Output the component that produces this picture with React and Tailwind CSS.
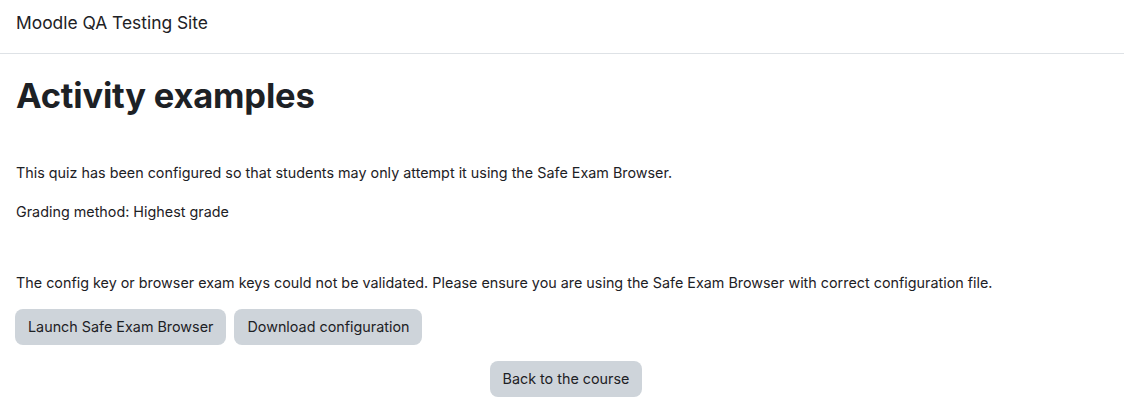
import React from "react";

const btn =
  "bg-[#ced4da] text-[#1d2125] rounded-lg px-[13px] h-9 text-[14.35px] leading-none";

export default function App() {
  return (
    <div className="min-h-screen bg-white text-[#1d2125] font-['Inter',sans-serif]">
      {/* NAVBAR */}
      <header className="h-[54px] border-b border-[#dee2e6] flex items-start pt-[11px] px-4">
        <span className="text-[17.4px] leading-6">Moodle QA Testing Site</span>
      </header>

      <main className="px-4">
        <h1 className="text-[34.5px] font-bold leading-none mt-[25px] tracking-[-0.2px]">
          Activity examples
        </h1>

        <p className="text-[14.35px] mt-[48px]">
          This quiz has been configured so that students may only attempt it using
          the Safe Exam Browser.
        </p>
        <p className="text-[14.35px] mt-[18px]">Grading method: Highest grade</p>

        <p className="text-[14.35px] mt-[49px]">
          The config key or browser exam keys could not be validated. Please ensure
          you are using the Safe Exam Browser with correct configuration file.
        </p>

        <div className="flex gap-2 mt-4 -ml-px">
          <button className={btn}>Launch Safe Exam Browser</button>
          <button className={btn}>Download configuration</button>
        </div>

        <div className="flex justify-center mt-4 ml-2">
          <button className={btn}>Back to the course</button>
        </div>
      </main>
    </div>
  );
}
